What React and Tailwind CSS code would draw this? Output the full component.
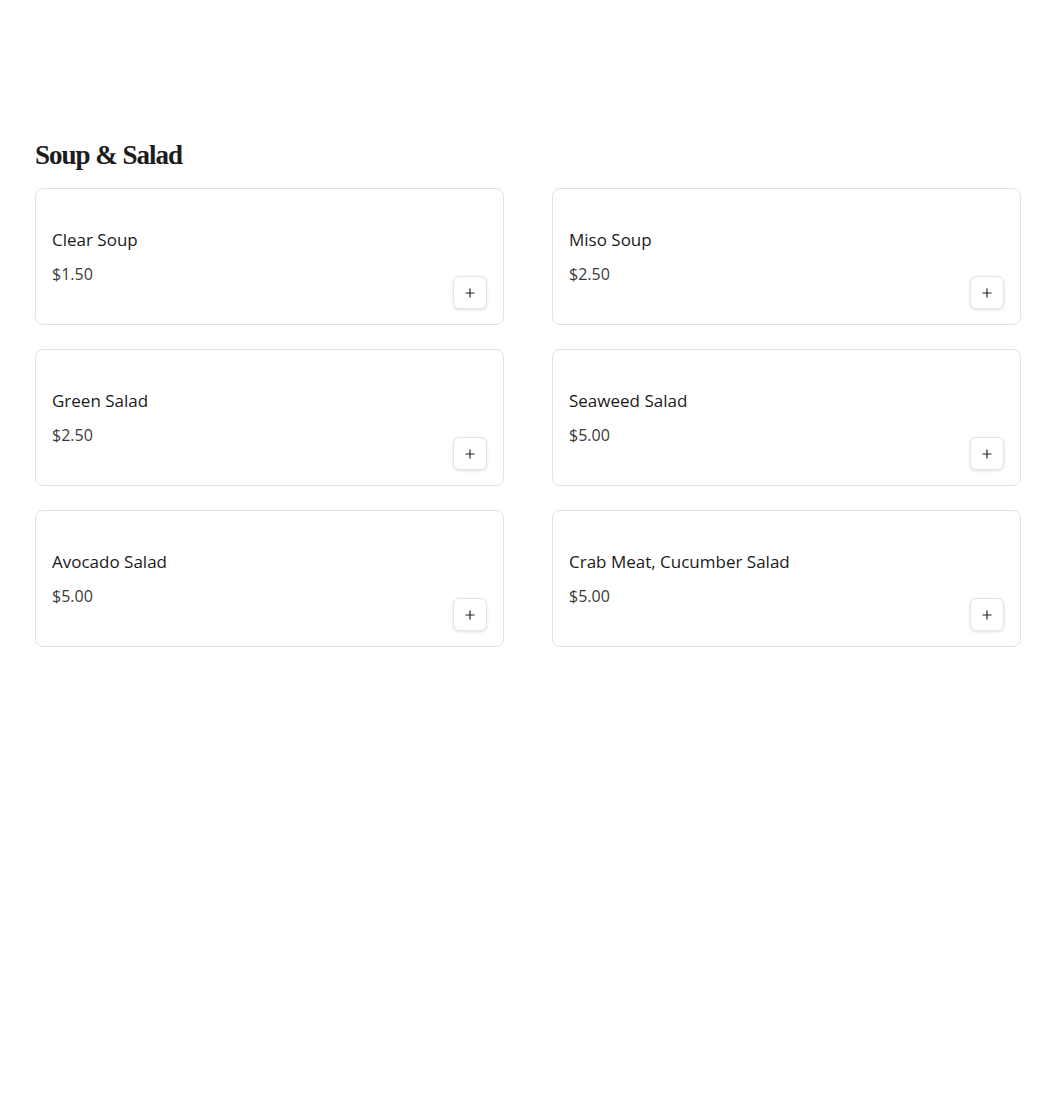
import { Plus } from "lucide-react";

const items = [
  { name: "Clear Soup", price: "$1.50" },
  { name: "Miso Soup", price: "$2.50" },
  { name: "Green Salad", price: "$2.50" },
  { name: "Seaweed Salad", price: "$5.00" },
  { name: "Avocado Salad", price: "$5.00" },
  { name: "Crab Meat, Cucumber Salad", price: "$5.00" },
];

const MenuCard = ({ item }) => (
  <div className="relative h-[137px] rounded-lg border border-[#e2e2e2] bg-white px-4 pt-[39px]">
    <h3 className="text-[17px] leading-6 text-[#1a1a1a]">{item.name}</h3>
    <p className="mt-[10px] text-[16px] leading-6 text-[#3a3a3a]">{item.price}</p>
    <button className="absolute bottom-[15px] right-4 flex h-[33px] w-[34px] items-center justify-center rounded-md border border-[#e5e5e5] bg-white shadow-[0_1px_3px_rgba(0,0,0,0.12)]">
      <Plus className="h-[14px] w-[14px] text-[#222]" strokeWidth={2} />
    </button>
  </div>
);

export default function App() {
  return (
    <div
      className="min-h-[1105px] bg-white pl-[35px] pr-[29px] pt-[137px]"
      style={{ fontFamily: '"Open Sans", "Noto Sans", sans-serif' }}
    >
      <h2
        className="text-[27px] font-black leading-[36px] tracking-[-1px] text-[#1c1c1c]"
        style={{ fontFamily: '"Liberation Serif", serif' }}
      >
        Soup &amp; Salad
      </h2>
      <div className="mt-[15px] grid grid-cols-2 gap-x-[48px] gap-y-[24px]">
        {items.map((item) => (
          <MenuCard key={item.name} item={item} />
        ))}
      </div>
    </div>
  );
}
